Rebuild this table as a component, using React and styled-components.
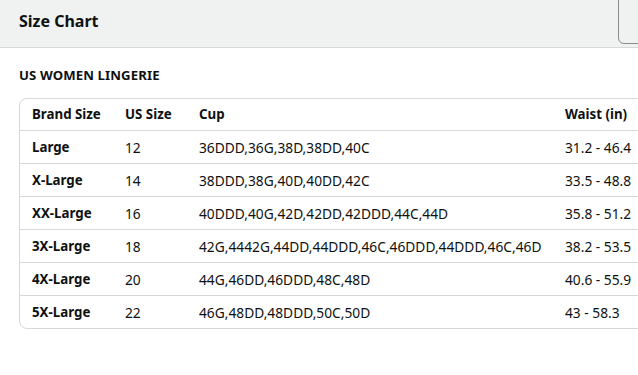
import React from "react";
import styled, { createGlobalStyle } from "styled-components";

const GlobalStyle = createGlobalStyle`
  body {
    margin: 0;
    background: #fff;
    font-family: "Noto Sans", "DejaVu Sans", sans-serif;
    color: #0f1111;
    overflow: hidden;
  }
`;

const Page = styled.div`
  width: 760px;
`;

const Header = styled.div`
  display: flex;
  align-items: flex-start;
  justify-content: space-between;
  height: 47px;
  background: #f0f2f2;
  border-bottom: 1px solid #d5d9d9;
  padding-left: 19px;
`;

const Title = styled.h1`
  margin: 0;
  padding-top: 10px;
  font-size: 16px;
  font-weight: 700;
  line-height: 22px;
`;

const CloseButton = styled.button`
  margin-top: -6px;
  margin-right: 102px;
  width: 40px;
  height: 50px;
  background: #f0f2f2;
  border: 1px solid #888c8c;
  border-radius: 6px;
`;

const Content = styled.div`
  padding: 18px 19px 0;
`;

const Section = styled.h2`
  margin: 0 0 13px;
  font-size: 13.2px;
  font-weight: 700;
  line-height: 19px;
  letter-spacing: 0.1px;
`;

const TableWrap = styled.div`
  border: 1px solid #d5d9d9;
  border-radius: 8px;
  overflow: hidden;
  width: 680px;
`;

const Table = styled.table`
  width: 100%;
  table-layout: fixed;
  border-collapse: collapse;
  font-size: 13.75px;
  line-height: 19px;
`;

const Row = styled.tr`
  & + & td {
    border-top: 1px solid #d5d9d9;
  }
`;

const HeadCell = styled.th`
  text-align: left;
  font-weight: 700;
  font-size: 13.3px;
  height: 31px;
  padding: 0 12px;
  white-space: nowrap;
  border-bottom: 1px solid #d5d9d9;
`;

const Cell = styled.td`
  height: 32px;
  padding: 0 12px;
  font-weight: ${(p) => (p.$bold ? 700 : 400)};
  font-size: ${(p) => (p.$bold ? "13.3px" : "13.75px")};
  white-space: nowrap;
`;

const widths = [93, 74, 366, 147];

const rows = [
  ["Large", "12", "36DDD,36G,38D,38DD,40C", "31.2 - 46.4"],
  ["X-Large", "14", "38DDD,38G,40D,40DD,42C", "33.5 - 48.8"],
  ["XX-Large", "16", "40DDD,40G,42D,42DD,42DDD,44C,44D", "35.8 - 51.2"],
  ["3X-Large", "18", "42G,4442G,44DD,44DDD,46C,46DDD,44DDD,46C,46D", "38.2 - 53.5"],
  ["4X-Large", "20", "44G,46DD,46DDD,48C,48D", "40.6 - 55.9"],
  ["5X-Large", "22", "46G,48DD,48DDD,50C,50D", "43 - 58.3"],
];

export default function App() {
  return (
    <Page>
      <GlobalStyle />
      <Header>
        <Title>Size Chart</Title>
        <CloseButton aria-label="Close" />
      </Header>
      <Content>
        <Section>US WOMEN LINGERIE</Section>
        <TableWrap>
          <Table>
            <colgroup>
              {widths.map((w, i) => (
                <col key={i} style={{ width: w }} />
              ))}
            </colgroup>
            <thead>
              <Row>
                <HeadCell>Brand Size</HeadCell>
                <HeadCell>US Size</HeadCell>
                <HeadCell>Cup</HeadCell>
                <HeadCell>Waist (in)</HeadCell>
              </Row>
            </thead>
            <tbody>
              {rows.map((r) => (
                <Row key={r[0]}>
                  <Cell $bold>{r[0]}</Cell>
                  <Cell>{r[1]}</Cell>
                  <Cell>{r[2]}</Cell>
                  <Cell>{r[3]}</Cell>
                </Row>
              ))}
            </tbody>
          </Table>
        </TableWrap>
      </Content>
    </Page>
  );
}
